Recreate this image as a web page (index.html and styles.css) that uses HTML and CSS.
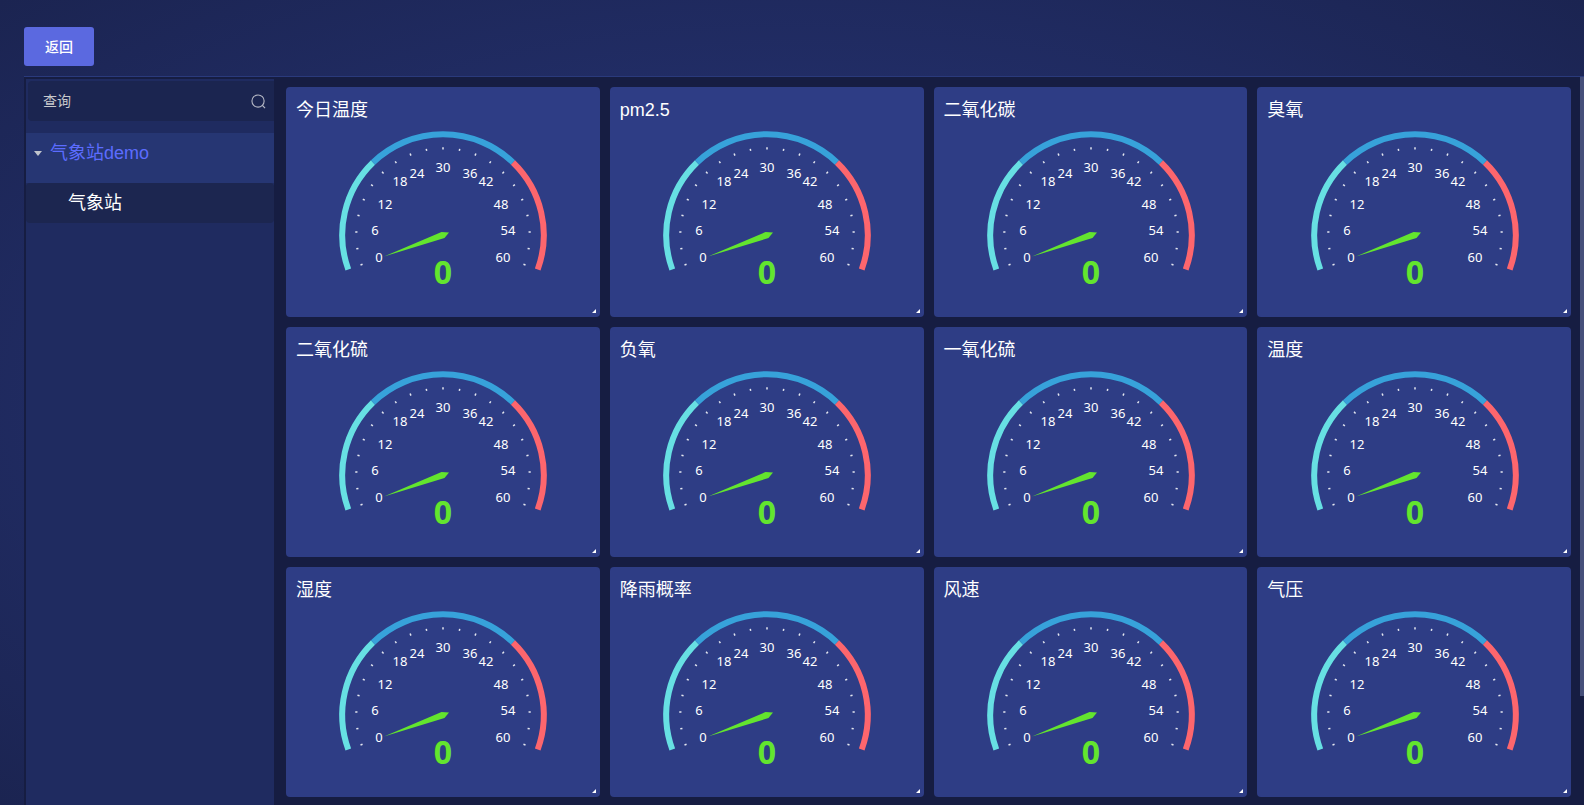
FILE: index.html
```html
<!DOCTYPE html>
<html lang="zh-CN">
<head>
<meta charset="utf-8">
<title>气象站</title>
<link rel="stylesheet" href="styles.css">
</head>
<body>
<div class="page">
  <header class="topbar"><button class="back" type="button">返回</button></header>
  <main class="content">
    <aside class="sidebar">
      <div class="search">
        <input class="search-input" type="text" placeholder="查询" aria-label="查询">
        <svg class="search-icon" viewBox="0 0 16 16"><circle cx="7.5" cy="7.5" r="6.5"/><path d="M12 12l3 3"/></svg>
      </div>
      <ul class="tree">
        <li class="node parent"><span class="caret"></span>气象站demo</li>
        <li class="node child">气象站</li>
      </ul>
    </aside>
    <section class="grid" id="grid"></section>
    <div class="scroll"><div class="thumb"></div></div>
  </main>
</div>
<script src="app.js"></script>
</body>
</html>
```
FILE: app.js
```js
const names = ['今日温度', 'pm2.5', '二氧化碳', '臭氧', '二氧化硫', '负氧', '一氧化硫', '温度', '湿度', '降雨概率', '风速', '气压'];

// 21 tick marks spread over the 220 degree sweep
let ticks = '';
for (let i = 0; i <= 20; i++) {
  const a = (200 - i * 11) * Math.PI / 180;
  const c = Math.cos(a), s = Math.sin(a);
  ticks += `<path d="M${(110 + 87.8 * c).toFixed(2)} ${(110 - 87.8 * s).toFixed(2)}L${(110 + 85.6 * c).toFixed(2)} ${(110 - 85.6 * s).toFixed(2)}"/>`;
}

const labels = [
  [46, 137, 0], [42, 110, 6], [52, 84, 12], [67, 61, 18], [84, 53, 24], [110, 47, 30],
  [137, 53, 36], [153, 61, 42], [168, 84, 48], [175, 110, 54], [170, 137, 60]
].map(([x, y, n]) => `<text x="${x}" y="${y}">${n}</text>`).join('');

const gauge = `
  <g class="arc">
    <path class="arc-low" d="M15.3 144.5A100.8 100.8 0 0 1 40 37.5"/>
    <path class="arc-mid" d="M40 37.5A100.8 100.8 0 0 1 180 37.5"/>
    <path class="arc-high" d="M180 37.5A100.8 100.8 0 0 1 204.7 144.5"/>
  </g>
  <g class="ticks">${ticks}</g>
  <g class="nums">${labels}</g>
  <path class="needle" d="M51 131.5L108.5 107L116 107.5L111.5 113Z"/>
  <text class="value" x="110" y="159">0</text>`;

document.getElementById('grid').innerHTML = names.map(n => `
  <article class="card">
    <h2 class="title">${n}</h2>
    <svg class="gauge" viewBox="0 0 220 180" role="img" aria-label="${n} 0">${gauge}</svg>
    <svg class="grip" viewBox="0 0 5 5"><path d="M5 0V5H0Z"/></svg>
  </article>`).join('');
```
FILE: styles.css
```css
* { box-sizing: border-box; }
body {
  margin: 0;
  font-family: "Liberation Sans", "Noto Sans CJK SC", sans-serif;
  color: #fff;
  background: #1b2451;
}
.page {
  height: 100vh;
  display: flex;
  flex-direction: column;
  padding-left: 24px;
  overflow: hidden;
  background: radial-gradient(ellipse at center, #293880 0%, #1b2451 100%);
}
.topbar { padding: 27px 0 10px; border-bottom: 1px solid #2a3a7c; display: flex; }
.back {
  width: 70px;
  height: 39px;
  padding: 0 0 2px;
  border: 0;
  border-radius: 3px;
  background: #5b69e0;
  color: #fff;
  font: inherit;
  font-size: 14px;
  font-weight: 500;
}
.content { flex: 1; min-height: 0; display: flex; background: #161d42; }
.sidebar { width: 248px; flex: none; margin: 2px 0 0 2px; background: #1f2b60; }
.search {
  display: flex;
  align-items: center;
  height: 40px;
  margin: 2px 0 12px 2px;
  padding: 0 8px 0 15px;
  border-radius: 4px 0 0 4px;
  background: #1b2550;
}
.search-input {
  flex: 1;
  min-width: 0;
  padding: 0;
  border: 0;
  outline: 0;
  background: none;
  color: #fff;
  font: inherit;
  font-size: 14px;
}
.search-input::placeholder { color: #c8c9cc; }
.search-icon { width: 15px; height: 15px; fill: none; stroke: #b4b7c4; stroke-width: 1.2; }
.tree { list-style: none; margin: 0; padding: 0; font-size: 18px; }
.node { display: flex; }
.parent {
  height: 50px;
  padding: 0 8px;
  gap: 8px;
  line-height: 40px;
  background: #263673;
  color: #5c6cff;
}
.caret {
  margin-top: 18px;
  border: solid transparent;
  border-width: 5px 4px 0;
  border-top-color: #c0c4cc;
  height: 0;
}
.child { height: 40px; padding-left: 42px; line-height: 40px; border-radius: 4px; background: #1c2650; }
.grid {
  flex: 1;
  min-width: 0;
  display: grid;
  grid-template-columns: repeat(4, 1fr);
  grid-auto-rows: 230px;
  gap: 10px;
  padding: 10px 9px 0 12px;
  overflow: hidden;
}
.card {
  position: relative;
  padding: 10px 9px 10px 10px;
  border-radius: 4px;
  background: #2e3d85;
}
.title { margin: 0; font-size: 18px; font-weight: 400; line-height: 26px; }
.gauge { display: block; width: 220px; height: 180px; margin: 2px auto 0; }
.grip { position: absolute; right: 4px; bottom: 4px; width: 4px; height: 4px; fill: #fff; }
.arc { fill: none; stroke-width: 6; }
.arc-low { stroke: #67e0e3; }
.arc-mid { stroke: #37a2da; }
.arc-high { stroke: #fd666d; }
.ticks { stroke: #e4e7f0; stroke-width: 1.5; }
.nums { fill: #fff; font: 13px "Noto Sans", sans-serif; text-anchor: middle; }
.needle { fill: #63e52e; }
.value { fill: #63e52e; font: bold 32px "Noto Sans", sans-serif; text-anchor: middle; }
.scroll { width: 4px; flex: none; }
.thumb { height: 85%; background: #454f7a; }
```
